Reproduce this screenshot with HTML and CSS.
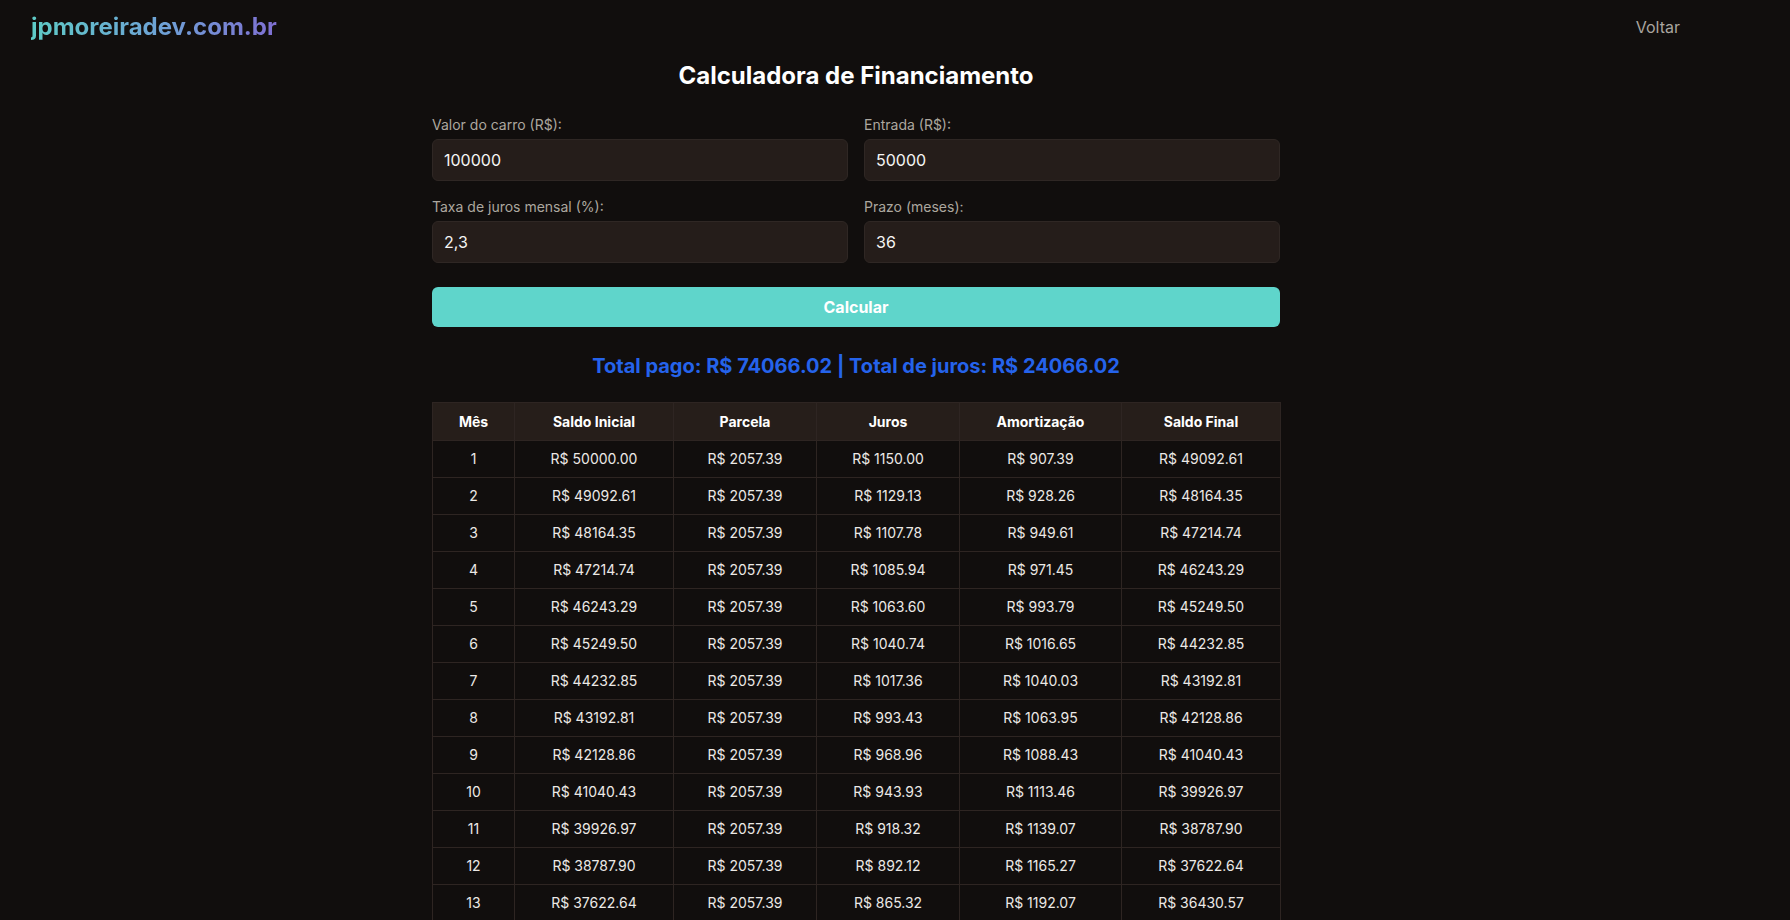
FILE: index.html
```html
<!DOCTYPE html>
<html lang="pt-BR">
<head>
<meta charset="utf-8">
<title>Calculadora de Financiamento</title>
<link rel="stylesheet" href="styles.css">
</head>
<body>
<header class="topbar">
  <a class="logo" href="#">jpmoreiradev.com.br</a>
  <a class="back" href="#">Voltar</a>
</header>
<main class="page">
  <section class="calc">
    <h1 class="title">Calculadora de Financiamento</h1>
    <form class="fields">
      <div class="field">
        <label class="label">Valor do carro (R$):</label>
        <input class="input" type="text" value="100000">
      </div>
      <div class="field">
        <label class="label">Entrada (R$):</label>
        <input class="input" type="text" value="50000">
      </div>
      <div class="field">
        <label class="label">Taxa de juros mensal (%):</label>
        <input class="input" type="text" value="2,3">
      </div>
      <div class="field">
        <label class="label">Prazo (meses):</label>
        <input class="input" type="text" value="36">
      </div>
    </form>
    <button class="btn" type="button">Calcular</button>
    <p class="result">Total pago: R$ 74066.02 | Total de juros: R$ 24066.02</p>
    <table class="schedule">
      <colgroup>
        <col class="c-mes"><col class="c-ini"><col class="c-parc"><col class="c-jur"><col class="c-amo"><col class="c-fin">
      </colgroup>
      <thead>
        <tr><th>Mês</th><th>Saldo Inicial</th><th>Parcela</th><th>Juros</th><th>Amortização</th><th>Saldo Final</th></tr>
      </thead>
      <tbody>
        <tr><td>1</td><td>R$ 50000.00</td><td>R$ 2057.39</td><td>R$ 1150.00</td><td>R$ 907.39</td><td>R$ 49092.61</td></tr>
        <tr><td>2</td><td>R$ 49092.61</td><td>R$ 2057.39</td><td>R$ 1129.13</td><td>R$ 928.26</td><td>R$ 48164.35</td></tr>
        <tr><td>3</td><td>R$ 48164.35</td><td>R$ 2057.39</td><td>R$ 1107.78</td><td>R$ 949.61</td><td>R$ 47214.74</td></tr>
        <tr><td>4</td><td>R$ 47214.74</td><td>R$ 2057.39</td><td>R$ 1085.94</td><td>R$ 971.45</td><td>R$ 46243.29</td></tr>
        <tr><td>5</td><td>R$ 46243.29</td><td>R$ 2057.39</td><td>R$ 1063.60</td><td>R$ 993.79</td><td>R$ 45249.50</td></tr>
        <tr><td>6</td><td>R$ 45249.50</td><td>R$ 2057.39</td><td>R$ 1040.74</td><td>R$ 1016.65</td><td>R$ 44232.85</td></tr>
        <tr><td>7</td><td>R$ 44232.85</td><td>R$ 2057.39</td><td>R$ 1017.36</td><td>R$ 1040.03</td><td>R$ 43192.81</td></tr>
        <tr><td>8</td><td>R$ 43192.81</td><td>R$ 2057.39</td><td>R$ 993.43</td><td>R$ 1063.95</td><td>R$ 42128.86</td></tr>
        <tr><td>9</td><td>R$ 42128.86</td><td>R$ 2057.39</td><td>R$ 968.96</td><td>R$ 1088.43</td><td>R$ 41040.43</td></tr>
        <tr><td>10</td><td>R$ 41040.43</td><td>R$ 2057.39</td><td>R$ 943.93</td><td>R$ 1113.46</td><td>R$ 39926.97</td></tr>
        <tr><td>11</td><td>R$ 39926.97</td><td>R$ 2057.39</td><td>R$ 918.32</td><td>R$ 1139.07</td><td>R$ 38787.90</td></tr>
        <tr><td>12</td><td>R$ 38787.90</td><td>R$ 2057.39</td><td>R$ 892.12</td><td>R$ 1165.27</td><td>R$ 37622.64</td></tr>
        <tr><td>13</td><td>R$ 37622.64</td><td>R$ 2057.39</td><td>R$ 865.32</td><td>R$ 1192.07</td><td>R$ 36430.57</td></tr>
        <tr><td>14</td><td>R$ 36430.57</td><td>R$ 2057.39</td><td>R$ 837.90</td><td>R$ 1219.49</td><td>R$ 35211.08</td></tr>
        <tr><td>15</td><td>R$ 35211.08</td><td>R$ 2057.39</td><td>R$ 809.85</td><td>R$ 1247.53</td><td>R$ 33963.55</td></tr>
        <tr><td>16</td><td>R$ 33963.55</td><td>R$ 2057.39</td><td>R$ 781.16</td><td>R$ 1276.23</td><td>R$ 32687.32</td></tr>
        <tr><td>17</td><td>R$ 32687.32</td><td>R$ 2057.39</td><td>R$ 751.81</td><td>R$ 1305.58</td><td>R$ 31381.74</td></tr>
        <tr><td>18</td><td>R$ 31381.74</td><td>R$ 2057.39</td><td>R$ 721.78</td><td>R$ 1335.61</td><td>R$ 30046.13</td></tr>
        <tr><td>19</td><td>R$ 30046.13</td><td>R$ 2057.39</td><td>R$ 691.06</td><td>R$ 1366.33</td><td>R$ 28679.80</td></tr>
        <tr><td>20</td><td>R$ 28679.80</td><td>R$ 2057.39</td><td>R$ 659.64</td><td>R$ 1397.75</td><td>R$ 27282.05</td></tr>
        <tr><td>21</td><td>R$ 27282.05</td><td>R$ 2057.39</td><td>R$ 627.49</td><td>R$ 1429.90</td><td>R$ 25852.14</td></tr>
        <tr><td>22</td><td>R$ 25852.14</td><td>R$ 2057.39</td><td>R$ 594.60</td><td>R$ 1462.79</td><td>R$ 24389.35</td></tr>
        <tr><td>23</td><td>R$ 24389.35</td><td>R$ 2057.39</td><td>R$ 560.96</td><td>R$ 1496.43</td><td>R$ 22892.92</td></tr>
        <tr><td>24</td><td>R$ 22892.92</td><td>R$ 2057.39</td><td>R$ 526.54</td><td>R$ 1530.85</td><td>R$ 21362.07</td></tr>
        <tr><td>25</td><td>R$ 21362.07</td><td>R$ 2057.39</td><td>R$ 491.33</td><td>R$ 1566.06</td><td>R$ 19796.01</td></tr>
        <tr><td>26</td><td>R$ 19796.01</td><td>R$ 2057.39</td><td>R$ 455.31</td><td>R$ 1602.08</td><td>R$ 18193.92</td></tr>
        <tr><td>27</td><td>R$ 18193.92</td><td>R$ 2057.39</td><td>R$ 418.46</td><td>R$ 1638.93</td><td>R$ 16555.00</td></tr>
        <tr><td>28</td><td>R$ 16555.00</td><td>R$ 2057.39</td><td>R$ 380.76</td><td>R$ 1676.62</td><td>R$ 14878.37</td></tr>
        <tr><td>29</td><td>R$ 14878.37</td><td>R$ 2057.39</td><td>R$ 342.20</td><td>R$ 1715.19</td><td>R$ 13163.18</td></tr>
        <tr><td>30</td><td>R$ 13163.18</td><td>R$ 2057.39</td><td>R$ 302.75</td><td>R$ 1754.64</td><td>R$ 11408.55</td></tr>
        <tr><td>31</td><td>R$ 11408.55</td><td>R$ 2057.39</td><td>R$ 262.40</td><td>R$ 1794.99</td><td>R$ 9613.56</td></tr>
        <tr><td>32</td><td>R$ 9613.56</td><td>R$ 2057.39</td><td>R$ 221.11</td><td>R$ 1836.28</td><td>R$ 7777.28</td></tr>
        <tr><td>33</td><td>R$ 7777.28</td><td>R$ 2057.39</td><td>R$ 178.88</td><td>R$ 1878.51</td><td>R$ 5898.77</td></tr>
        <tr><td>34</td><td>R$ 5898.77</td><td>R$ 2057.39</td><td>R$ 135.67</td><td>R$ 1921.72</td><td>R$ 3977.05</td></tr>
        <tr><td>35</td><td>R$ 3977.05</td><td>R$ 2057.39</td><td>R$ 91.47</td><td>R$ 1965.92</td><td>R$ 2011.13</td></tr>
        <tr><td>36</td><td>R$ 2011.13</td><td>R$ 2057.39</td><td>R$ 46.26</td><td>R$ 2011.13</td><td>R$ 0.00</td></tr>
      </tbody>
    </table>
  </section>
</main>
</body>
</html>
```

FILE: styles.css
```css
* { box-sizing: border-box; }

html, body {
  margin: 0;
  background: #110e0d;
  color: #f5f5f4;
  font-family: Inter, "Noto Sans", "Liberation Sans", sans-serif;
}

.topbar {
  height: 52px;
  display: flex;
  align-items: center;
  justify-content: space-between;
  padding: 0 110px 0 31px;
}

.logo {
  font-size: 24px;
  line-height: 29px;
  font-weight: 700;
  text-decoration: none;
  background: linear-gradient(90deg, #5ecbc6 0%, #6fa0d6 55%, #7f6fd2 100%);
  -webkit-background-clip: text;
  background-clip: text;
  color: transparent;
}

.back {
  font-size: 16px;
  line-height: 19px;
  color: #aaa59f;
  text-decoration: none;
  margin-top: 2px;
}

.page {
  display: flex;
  justify-content: center;
  padding: 0 78px 40px 0;
}

.calc {
  width: 848px;
}

.title {
  margin: 9px 0 26px;
  font-size: 24px;
  line-height: 29px;
  font-weight: 700;
  text-align: center;
  color: #ffffff;
}

.fields {
  display: grid;
  grid-template-columns: 1fr 1fr;
  column-gap: 16px;
  row-gap: 17px;
  margin: 0;
}

.field {
  display: flex;
  flex-direction: column;
}

.label {
  font-size: 14px;
  line-height: 17px;
  color: #aca79f;
  margin-bottom: 6px;
}

.input {
  width: 100%;
  height: 42px;
  background: #251d1a;
  border: 1px solid #2f2724;
  border-radius: 6px;
  padding: 0 11px;
  color: #f5f5f4;
  font-family: inherit;
  font-size: 16px;
  outline: none;
}

.btn {
  display: block;
  width: 100%;
  height: 40px;
  margin-top: 24px;
  border: none;
  border-radius: 6px;
  background: #5fd5cb;
  color: #ffffff;
  font-family: inherit;
  font-size: 16px;
  font-weight: 700;
}

.result {
  margin: 27px 0 24px;
  text-align: center;
  font-size: 20px;
  line-height: 24px;
  font-weight: 700;
  color: #2563eb;
}

.schedule {
  width: 100%;
  border-collapse: collapse;
  table-layout: fixed;
  font-size: 14px;
}

.c-mes { width: 82px; }
.c-ini { width: 159px; }
.c-parc { width: 143px; }
.c-jur { width: 143px; }
.c-amo { width: 162px; }
.c-fin { width: 159px; }

.schedule th,
.schedule td {
  border: 1px solid #2e2522;
  text-align: center;
  line-height: 16px;
}

.schedule th {
  background: #261e1a;
  color: #ffffff;
  font-weight: 700;
  padding: 10.5px 8px;
}

.schedule td {
  color: #ece9e6;
  padding: 10px 8px;
}
```
